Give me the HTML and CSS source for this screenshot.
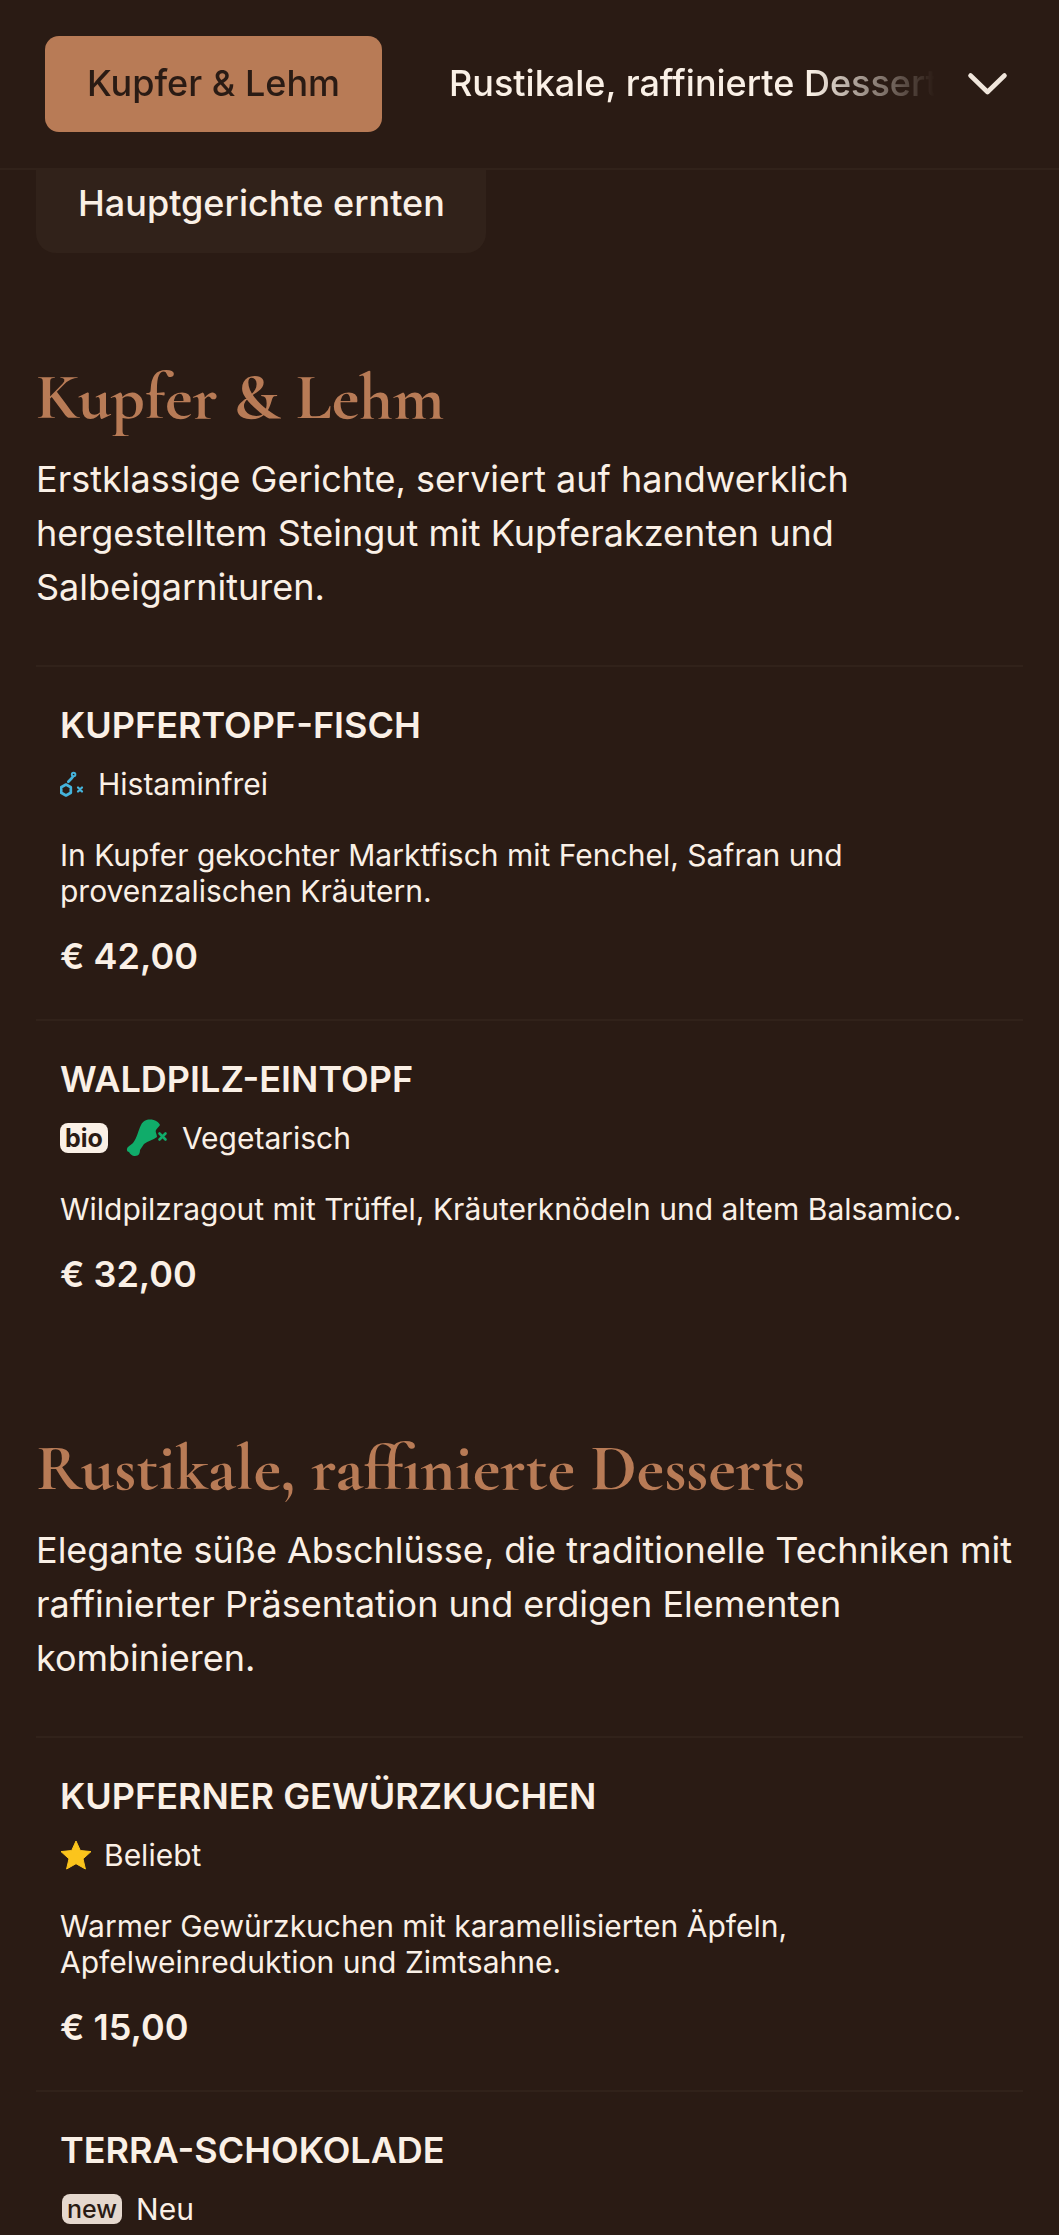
FILE: index.html
```html
<!DOCTYPE html>
<html lang="de">
<head>
<meta charset="utf-8">
<title>Speisekarte</title>
<link rel="stylesheet" href="styles.css">
</head>
<body>
<header class="topbar">
  <nav class="tabs">
    <a class="tab tab-active">Kupfer &amp; Lehm</a>
    <a class="tab">Rustikale, raffinierte Desserts</a>
  </nav>
  <button class="chevron" aria-label="Menü öffnen">
    <svg viewBox="0 0 42 26" width="42" height="26"><path d="M3.5 4.5 L20.5 21 L37.5 4.5" fill="none" stroke="#f0e6dc" stroke-width="4.6" stroke-linecap="round" stroke-linejoin="round"/></svg>
  </button>
</header>
<main class="content">
  <div class="prev-tab">Hauptgerichte ernten</div>

  <section class="section section-first">
    <h2 class="section-title">Kupfer &amp; Lehm</h2>
    <p class="section-text">Erstklassige Gerichte, serviert auf handwerklich hergestelltem Steingut mit Kupferakzenten und Salbeigarnituren.</p>
    <article class="dish">
      <h3 class="dish-name">KUPFERTOPF-FISCH</h3>
      <div class="tags">
        <svg class="icon-mol" viewBox="0 0 26 30" width="26" height="30"><g fill="none" stroke="#45b4dc" stroke-width="2.7" stroke-linejoin="round" stroke-linecap="round"><path d="M6 15.5 L10.8 18.25 V23.75 L6 26.5 L1.2 23.75 V18.25 Z"/><path d="M8.3 12.7 L11.7 9.3 L13 7.5"/><circle cx="13.6" cy="5.6" r="1.8" stroke-width="1.9"/><path d="M18 18.5 L22 22.5 M22 18.5 L18 22.5" stroke-width="2.2"/></g></svg>
        <span class="tag-text">Histaminfrei</span>
      </div>
      <p class="dish-text">In Kupfer gekochter Marktfisch mit Fenchel, Safran und provenzalischen Kräutern.</p>
      <div class="price">€ 42,00</div>
    </article>
    <article class="dish">
      <h3 class="dish-name">WALDPILZ-EINTOPF</h3>
      <div class="tags">
        <span class="badge badge-bio">bio</span>
        <svg class="icon-leg" viewBox="0 0 42 38" width="42" height="38"><path d="M24 .5 C29 .5 33 3 34 6 C33 8 31 9 30 11 C29 13 31 15 31 18 C27 21 22 22 18 25 L14 31 C14 34 13 37 9 37 C7 37.5 4 35 3 33 C1 33 0 30 2 28 C4 26 6 25 7 24 C11 19 12 12 15 6 C17 2 20 .5 24 .5 Z" fill="#10ac6a"/><path d="M33.5 14.5 L39.5 20.5 M39.5 14.5 L33.5 20.5" stroke="#10ac6a" stroke-width="2.6" stroke-linecap="round" fill="none"/></svg>
        <span class="tag-text">Vegetarisch</span>
      </div>
      <p class="dish-text">Wildpilzragout mit Trüffel, Kräuterknödeln und altem Balsamico.</p>
      <div class="price">€ 32,00</div>
    </article>
  </section>

  <section class="section">
    <h2 class="section-title">Rustikale, raffinierte Desserts</h2>
    <p class="section-text">Elegante süße Abschlüsse, die traditionelle Techniken mit raffinierter Präsentation und erdigen Elementen kombinieren.</p>
    <article class="dish">
      <h3 class="dish-name">KUPFERNER GEWÜRZKUCHEN</h3>
      <div class="tags">
        <svg class="icon-star" viewBox="0 0 32 30" width="32" height="30"><path d="M16 1 L20.3 10.5 L31 11.6 L23 18.8 L25.4 29 L16 23.7 L6.6 29 L9 18.8 L1 11.6 L11.7 10.5 Z" fill="#fbc41c" stroke="#fbc41c" stroke-width="1" stroke-linejoin="round"/></svg>
        <span class="tag-text">Beliebt</span>
      </div>
      <p class="dish-text">Warmer Gewürzkuchen mit karamellisierten Äpfeln, Apfelweinreduktion und Zimtsahne.</p>
      <div class="price">€ 15,00</div>
    </article>
    <article class="dish">
      <h3 class="dish-name">TERRA-SCHOKOLADE</h3>
      <div class="tags">
        <span class="badge badge-new">new</span>
        <span class="tag-text">Neu</span>
      </div>
    </article>
  </section>
</main>
</body>
</html>
```
FILE: styles.css
```css
* { box-sizing: border-box; }
html, body {
  margin: 0;
  height: 2235px;
  overflow: hidden;
  background: #2a1b14;
}
body {
  font-family: Inter, "Liberation Sans", sans-serif;
  color: #faf0e6;
}
.topbar {
  height: 170px;
  display: flex;
  align-items: center;
  padding: 0 45px;
  border-bottom: 2px solid #31221a;
  background: #2a1b14;
}
.tabs {
  flex: 0 0 895px;
  display: flex;
  align-items: center;
  gap: 67px;
  overflow: hidden;
  white-space: nowrap;
  -webkit-mask-image: linear-gradient(to right, #000 calc(100% - 130px), transparent calc(100% - 5px));
  mask-image: linear-gradient(to right, #000 calc(100% - 130px), transparent calc(100% - 5px));
}
.tab {
  flex: none;
  padding-bottom: 2px;
  font-size: 36px;
  font-weight: 500;
  line-height: 40px;
  color: #faf0e6;
}
.tab-active {
  width: 337px;
  height: 96px;
  display: flex;
  align-items: center;
  justify-content: center;
  background: #b87b56;
  color: #2a1b14;
  border-radius: 14px;
}
.chevron {
  margin-left: 27px;
  padding: 0;
  border: 0;
  background: none;
  display: flex;
}
.content { padding: 0 36px; }
.prev-tab {
  width: 450px;
  height: 83px;
  padding: 13px 42px 0;
  font-size: 36px;
  font-weight: 500;
  line-height: 40px;
  white-space: nowrap;
  background: #31221a;
  border-radius: 0 0 20px 20px;
}
.section { margin-top: 93px; }
.section-first { margin-top: 106px; }
.section-title {
  margin: 0;
  font-family: "Cormorant Garamond", "Liberation Serif", serif;
  font-size: 66px;
  font-weight: 700;
  line-height: 76px;
  color: #b87b56;
}
.section-text {
  margin: 17px 0 51px;
  font-size: 36px;
  line-height: 54px;
}
.dish {
  border-top: 2px solid #31221a;
  padding: 34px 24px 39px;
}
.dish-name {
  margin: 0;
  font-size: 36px;
  font-weight: 600;
  line-height: 48px;
}
.tags {
  display: flex;
  align-items: center;
  gap: 12px;
  height: 40px;
  margin-top: 15px;
}
.tag-text {
  font-size: 30px;
  line-height: 40px;
}
.badge {
  border-radius: 8px;
  color: #2a1b14;
  font-size: 25px;
  line-height: 30px;
  height: 30px;
  padding: 0 5px;
}
.badge-bio { background: #faf0e6; font-weight: 700; }
.badge-new { background: #e5d8ce; font-weight: 500; margin: 0 2px; }
.icon-leg { margin: 0 2px 0 6px; }
.dish-text {
  margin: 33px 0 0;
  font-size: 30px;
  line-height: 36px;
}
.price {
  margin-top: 23px;
  font-size: 36px;
  font-weight: 600;
  line-height: 48px;
}
```
